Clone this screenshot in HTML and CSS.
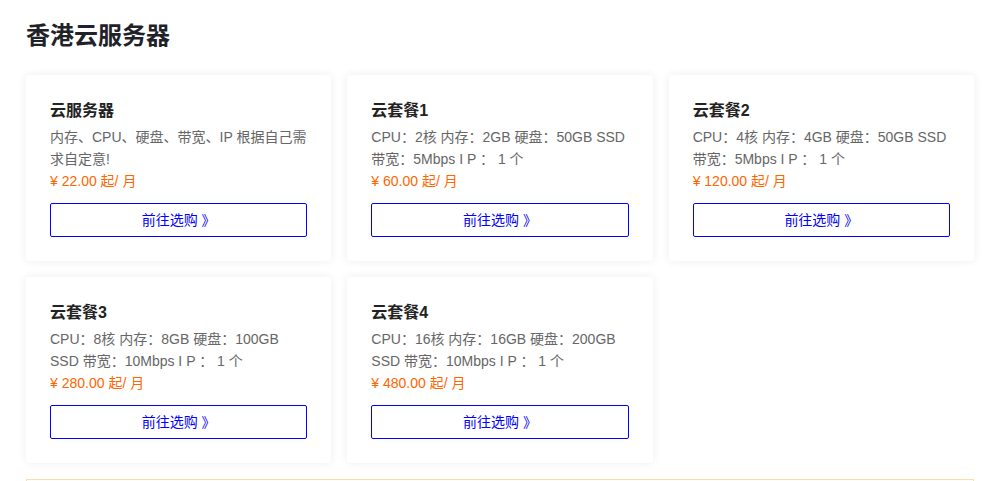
FILE: index.html
```html
<!DOCTYPE html>
<html lang="zh-CN">
<head>
    <meta charset="UTF-8">
    <title>香港云服务器</title>
    <link rel="stylesheet" href="styles.css">
</head>
<body>
    <div class="page">
        <h1 class="page-title">香港云服务器</h1>
        <div class="plan-grid">
            <div class="plan-card">
                <h3 class="plan-name">云服务器</h3>
                <p class="plan-desc">内存、CPU、硬盘、带宽、IP 根据自己需求自定意!</p>
                <p class="plan-price">¥ 22.00 起/ 月</p>
                <a href="#" class="buy-btn">前往选购 》</a>
            </div>
            <div class="plan-card">
                <h3 class="plan-name">云套餐1</h3>
                <p class="plan-desc">CPU：2核 内存：2GB 硬盘：50GB SSD 带宽：5Mbps I P ： 1 个</p>
                <p class="plan-price">¥ 60.00 起/ 月</p>
                <a href="#" class="buy-btn">前往选购 》</a>
            </div>
            <div class="plan-card">
                <h3 class="plan-name">云套餐2</h3>
                <p class="plan-desc">CPU：4核 内存：4GB 硬盘：50GB SSD 带宽：5Mbps I P ： 1 个</p>
                <p class="plan-price">¥ 120.00 起/ 月</p>
                <a href="#" class="buy-btn">前往选购 》</a>
            </div>
            <div class="plan-card">
                <h3 class="plan-name">云套餐3</h3>
                <p class="plan-desc">CPU：8核 内存：8GB 硬盘：100GB SSD 带宽：10Mbps I P ： 1 个</p>
                <p class="plan-price">¥ 280.00 起/ 月</p>
                <a href="#" class="buy-btn">前往选购 》</a>
            </div>
            <div class="plan-card">
                <h3 class="plan-name">云套餐4</h3>
                <p class="plan-desc">CPU：16核 内存：16GB 硬盘：200GB SSD 带宽：10Mbps I P ： 1 个</p>
                <p class="plan-price">¥ 480.00 起/ 月</p>
                <a href="#" class="buy-btn">前往选购 》</a>
            </div>
        </div>
        <div class="notice"></div>
    </div>
</body>
</html>
```

FILE: styles.css
```css
body {
    font-family: "Liberation Sans", "Noto Sans CJK SC", sans-serif;
    margin: 0;
    padding: 0;
    background-color: #fff;
    color: #222;
}
.page {
    padding: 0 11px 0 26px;
}
.page-title {
    margin: 0;
    padding-top: 21px;
    font-size: 24px;
    line-height: 30px;
    font-weight: 700;
    color: #1f2329;
}
.plan-grid {
    display: grid;
    grid-template-columns: repeat(3, 1fr);
    gap: 16px;
    margin-top: 24px;
}
.plan-card {
    background-color: #fff;
    border-radius: 3px;
    box-shadow: 0 0 10px rgba(0, 0, 0, 0.07);
    padding: 24px 24px 24px;
    height: 186px;
    box-sizing: border-box;
}
.plan-name {
    margin: 0 0 3px;
    font-size: 16px;
    line-height: 24px;
    font-weight: 700;
    color: #222;
}
.plan-desc {
    margin: 0;
    font-size: 14px;
    line-height: 22px;
    color: #666;
}
.plan-price {
    margin: 0;
    font-size: 14px;
    line-height: 22px;
    color: #ff6600;
}
.buy-btn {
    display: block;
    margin-top: 11px;
    height: 34px;
    line-height: 32px;
    box-sizing: border-box;
    border: 1px solid #0000ff;
    border-radius: 2px;
    color: #0000ff;
    text-align: center;
    text-decoration: none;
    font-size: 14px;
}
.notice {
    margin-top: 16px;
    height: 40px;
    border: 1px solid #fbe0a6;
    background-color: #fffdf7;
}
```
